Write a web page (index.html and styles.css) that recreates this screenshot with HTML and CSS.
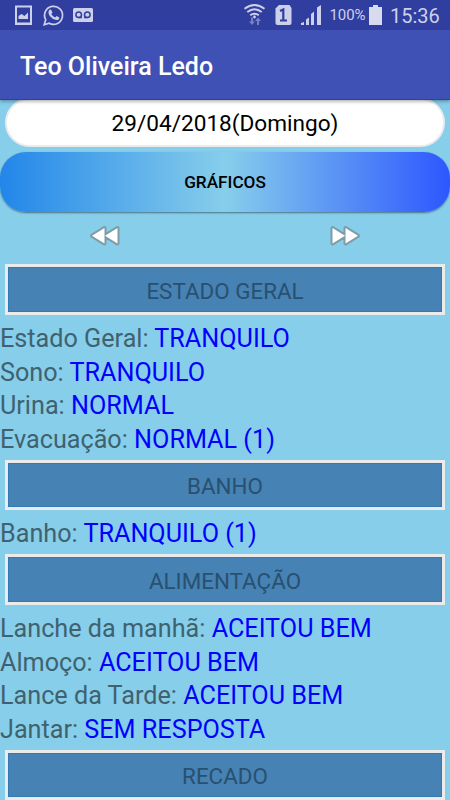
FILE: index.html
```
<!DOCTYPE html>
<html lang="pt-BR">
<head>
<meta charset="utf-8">
<title>Teo Oliveira Ledo</title>
<link rel="stylesheet" href="styles.css">
</head>
<body>
<div class="screen">
  <header class="top">
    <div class="status">
      <svg class="status-left" width="100" height="30" viewBox="0 0 100 30">
        <path fill="#cdd0ea" fill-rule="evenodd" d="M15 5.500h17v19.500h-17zM17 7.500v15h13v-15z"/>
        <path fill="#cdd0ea" d="M18.500 19v-3l3-2 3 2 3.500-3.500v6.500z"/>
        <path fill="none" stroke="#cdd0ea" stroke-width="1.700" d="M44.200 24.700l1.500-5a9 9 0 1 1 3.500 3.500z"/>
        <path fill="#cdd0ea" d="M49.500 9.800l1.500-.3 1.500 3-1.200 1.600q1.200 2.400 3.800 3.400l1.500-1.500 2.700 1.400q.2 2.700-3 2.700-3.600-.4-6.300-3.800-2.800-3.800-.5-6.500z"/>
        <rect x="73" y="8" width="20" height="14" rx="1.500" fill="#cdd0ea"/>
        <g fill="none" stroke="#303f9f" stroke-width="1.500"><circle cx="78.700" cy="14.700" r="2.800"/><circle cx="87.300" cy="14.700" r="2.800"/><path d="M78.700 17.500h3.300M84 17.500h3.300"/></g>
      </svg>
      <svg class="status-right" width="92" height="30" viewBox="240 0 92 30">
        <g fill="none" stroke="#cdd0ea" stroke-width="1.900"><path d="M244.500 8.700q10-7.500 20 0M247.300 12q7.200-5.500 14.400 0M250.200 15.300q4.300-3.200 8.600 0"/></g>
        <circle cx="254.500" cy="17" r="1.400" fill="#cdd0ea"/>
        <path fill="#7781c3" d="M251 17.500h2v4h2l-3 3.500-3-3.500h2zM257 25v-4h-2l3-3.500 3 3.500h-2v4z"/>
        <path fill="#cdd0ea" d="M279 5h10.500l2 3v15a2 2 0 0 1-2 2h-12a2 2 0 0 1-2-2v-14.500z"/>
        <path fill="none" stroke="#303f9f" stroke-width="2.200" d="M280 11l3.300-1.500v11M280 20.500h7"/>
        <path fill="#cdd0ea" d="M301 25v-2l3-1v3zM306 25v-5.500l3-2v7.500zM311 25v-11l3-2.500v13.500zM317 25v-17.500l4-2.500v20z"/>
      </svg>
      <span class="percent">100%</span>
      <svg class="battery" width="13" height="20" viewBox="0 0 13 20"><path fill="#d8daee" d="M4 0h5v2h4v18h-13v-18h4z"/></svg>
      <span class="clock">15:36</span>
    </div>
    <h1 class="title"><span>Teo Oliveira Ledo</span></h1>
  </header>
  <main class="content">
    <div class="date"><span>29/04/2018(Domingo)</span></div>
    <div class="charts"><span>GRÁFICOS</span></div>
    <nav class="pager">
      <svg width="32" height="22" viewBox="0 0 32 22"><path class="arrow" d="M15.500 3v15.500L3 10.700zM28.500 3v15.500L16 10.700z"/></svg>
      <svg width="32" height="22" viewBox="0 0 32 22"><path class="arrow" d="M3.500 3v15.500L16 10.700zM16.500 3v15.500L29 10.700z"/></svg>
    </nav>
    <h2 class="section"><span>ESTADO GERAL</span></h2>
    <p class="row">Estado Geral: <b>TRANQUILO</b></p>
    <p class="row">Sono: <b>TRANQUILO</b></p>
    <p class="row">Urina: <b>NORMAL</b></p>
    <p class="row">Evacuação: <b>NORMAL (1)</b></p>
    <h2 class="section"><span>BANHO</span></h2>
    <p class="row">Banho: <b>TRANQUILO (1)</b></p>
    <h2 class="section"><span>ALIMENTAÇÃO</span></h2>
    <p class="row">Lanche da manhã: <b>ACEITOU BEM</b></p>
    <p class="row">Almoço: <b>ACEITOU BEM</b></p>
    <p class="row">Lance da Tarde: <b>ACEITOU BEM</b></p>
    <p class="row">Jantar: <b>SEM RESPOSTA</b></p>
    <h2 class="section"><span>RECADO</span></h2>
  </main>
</div>
</body>
</html>
```
FILE: styles.css
```
* { box-sizing: border-box; }
body { margin: 0; font-family: Roboto, "Liberation Sans", sans-serif; }
.screen { width: 450px; height: 800px; overflow: hidden; background: #87ceeb; }
.top { position: relative; z-index: 1; height: 100px; background: #3f51b5; border-bottom: 1px solid #2443ae; box-shadow: 0 1px 4px rgba(0,0,0,.4); }
.status { display: flex; align-items: center; height: 30px; background: #303f9f; color: #cdd0ea; }
.status-right { margin-left: 140px; }
.status-left, .status-right, .battery { flex: none; }
.percent { width: 34px; margin-left: -2.500px; font-size: 15px; letter-spacing: -.1px; white-space: nowrap; }
.battery { margin-left: 5px; }
.clock { margin-left: 8.500px; padding-top: 1px; font-size: 20px; }
.title { display: flex; align-items: center; height: 70px; margin: 0; padding: 3px 0 0 20px; color: #fff; font-size: 25px; font-weight: 500; }
.date { display: flex; align-items: center; justify-content: center; height: 49px; margin: -2px 5px 0; padding-top: 1px; background: #fff; border: 2px solid #ebebeb; border-radius: 25px; font-size: 22.600px; color: #000; }
.charts { display: flex; align-items: center; justify-content: center; height: 60px; margin-top: 5px; border-radius: 26px; background: linear-gradient(90deg, #2286e9, #87ceeb 50%, #2d57ff); box-shadow: 0 1px 2px rgba(0,0,0,.45); font-size: 17.200px; font-weight: 500; color: #000; }
.pager { display: flex; justify-content: space-between; height: 52.300px; padding: 13px 89px 0; }
.arrow { fill: #fff; stroke: #7f9ca8; stroke-width: 4; stroke-linejoin: round; paint-order: stroke; }
.section { display: flex; align-items: center; justify-content: center; height: 50.600px; margin: 0 5px 5px; padding-top: 2px; background: #4682b4; border: 3px solid #ebebeb; box-shadow: inset 0 0 0 1px #2f79b5; color: #29506f; font-size: 22.400px; font-weight: 400; }
.row { height: 33.750px; margin: 0; font-size: 25.200px; line-height: 37.500px; color: #3f626e; white-space: nowrap; }
.row b { color: #00f; font-weight: 400; }
.row + .section { margin-top: 5px; }
```
